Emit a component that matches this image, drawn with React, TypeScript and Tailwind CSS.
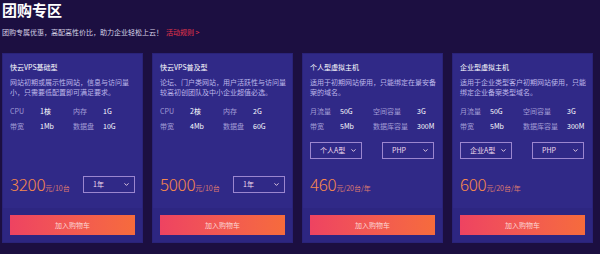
import { ChevronDown } from 'lucide-react';

interface Spec {
  label: string;
  value: string;
}

interface Plan {
  name: string;
  desc: string;
  specs: Spec[];
  price: string;
  unit: string;
  selects: string[];
  period?: string;
}

const PLANS: Plan[] = [
  {
    name: '快云VPS基础型',
    desc: '网站初期或展示性网站，信息与访问量小，只需要低配置即可满足要求。',
    specs: [
      { label: 'CPU', value: '1核' },
      { label: '内存', value: '1G' },
      { label: '带宽', value: '1Mb' },
      { label: '数据盘', value: '10G' },
    ],
    price: '3200',
    unit: '元/10台',
    selects: [],
    period: '1年',
  },
  {
    name: '快云VPS普及型',
    desc: '论坛、门户类网站，用户活跃性与访问量较高初创团队及中小企业超值必选。',
    specs: [
      { label: 'CPU', value: '2核' },
      { label: '内存', value: '2G' },
      { label: '带宽', value: '4Mb' },
      { label: '数据盘', value: '60G' },
    ],
    price: '5000',
    unit: '元/10台',
    selects: [],
    period: '1年',
  },
  {
    name: '个人型虚拟主机',
    desc: '适用于初期网站使用，只能绑定在景安备案的域名。',
    specs: [
      { label: '月流量', value: '50G' },
      { label: '空间容量', value: '3G' },
      { label: '带宽', value: '5Mb' },
      { label: '数据库容量', value: '300M' },
    ],
    price: '460',
    unit: '元/20台/年',
    selects: ['个人A型', 'PHP'],
  },
  {
    name: '企业型虚拟主机',
    desc: '适用于企业类型客户初期网站使用，只能绑定企业备案类型域名。',
    specs: [
      { label: '月流量', value: '50G' },
      { label: '空间容量', value: '3G' },
      { label: '带宽', value: '5Mb' },
      { label: '数据库容量', value: '300M' },
    ],
    price: '600',
    unit: '元/20台/年',
    selects: ['企业A型', 'PHP'],
  },
];

function FakeSelect({ label }: { label: string }) {
  return (
    <div className="flex items-center justify-between w-[52px] h-[17px] pl-[9px] pr-[4px] border border-[#9b86cf] text-[7px] text-[#f3dcec]">
      <span>{label}</span>
      <ChevronDown size={7} strokeWidth={3} className="text-[#f3dcec]" />
    </div>
  );
}

function PlanCard({ plan }: { plan: Plan }) {
  return (
    <div className="w-[141px] h-[190px] shrink-0 flex flex-col bg-[#302987] border border-[#2a2379]">
      <div className="flex-1 flex flex-col px-[7px] pt-[8px] pb-[16px]">
        <h3 className="text-[7px] leading-[10px] text-white">{plan.name}</h3>
        <p className="mt-[4.5px] mr-[-5px] text-[7px] leading-[10.5px] text-[#bdb6ea]">{plan.desc}</p>
        <div className="mt-[6.5px] grid grid-cols-[30px_33px_auto_auto] justify-start text-[7px] leading-[15px]">
          {plan.specs.map((s, i) => (
            <div key={s.label} className="contents">
              <span className={`text-[#a39dd6] ${i % 2 === 1 ? 'pr-[9px]' : ''}`}>{s.label}</span>
              <span className="text-white">{s.value}</span>
            </div>
          ))}
        </div>
        {plan.selects.length > 0 && (
          <div className="mt-[7.5px] flex justify-between pr-[1px]">
            {plan.selects.map((s) => (
              <FakeSelect key={s} label={s} />
            ))}
          </div>
        )}
        <div className="mt-auto flex items-center justify-between h-[16px]">
          <div className="flex items-baseline text-[#f5874e]">
            <span className="text-[17px] font-light leading-none tracking-[-0.3px]">{plan.price}</span>
            <span className="text-[7px] text-[#dd7a70]">{plan.unit}</span>
          </div>
          {plan.period && <FakeSelect label={plan.period} />}
        </div>
      </div>
      <div className="h-[34px] px-[7px] py-[7px] bg-[#2d2681]">
        <button className="w-full h-[20px] flex items-center justify-center bg-gradient-to-r from-[#ee4361] to-[#f66b3c] text-[7px] text-[#fcd6d2]">
          加入购物车
        </button>
      </div>
    </div>
  );
}

export default function App() {
  return (
    <div
      className="w-[600px] h-[254px] overflow-hidden bg-[#1c0f41]"
      style={{ fontFamily: '"Noto Sans CJK SC", "Noto Sans", sans-serif' }}
    >
      <div className="pl-[2px] pt-[1px]">
        <h1 className="text-[15px] leading-[18px] font-bold text-white">团购专区</h1>
        <p className="mt-[8px] text-[7px] leading-[10px] text-[#d6d2e6]">
          团购专属优惠，高配高性价比，助力企业轻松上云！
          <span className="ml-[3px] text-[#e8364c]">活动规则 &gt;</span>
        </p>
      </div>
      <div className="mt-[16px] pl-[2px] flex gap-[9px]">
        {PLANS.map((p) => (
          <PlanCard key={p.name} plan={p} />
        ))}
      </div>
    </div>
  );
}
